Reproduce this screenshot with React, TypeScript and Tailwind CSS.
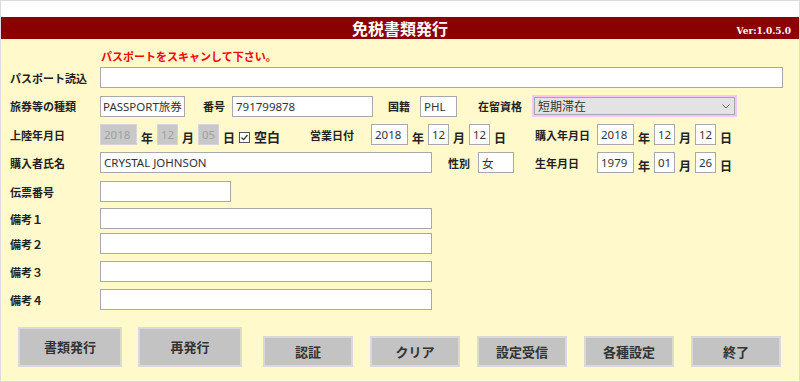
import { FC } from "react";

const jp = { fontFamily: '"Noto Sans CJK JP", "Noto Sans", sans-serif' };
const latin = { fontFamily: '"Noto Sans", "Noto Sans CJK JP", sans-serif' };

const inputCls =
  "h-[21px] border border-[#a9a9a9] bg-white px-[3px] text-[11.5px] text-[#333] leading-[19px] outline-none";
const disabledCls =
  "h-[21px] border border-[#d6d6d6] bg-[#c8c8c8] px-[3px] text-[11.5px] text-[#a0a0a0] leading-[19px] outline-none";

const Label: FC<{ text: string; w: string; ml?: string }> = ({ text, w, ml = "" }) => (
  <span className={`${w} ${ml} shrink-0 text-[11px] font-bold text-[#222] leading-[14px]`}>{text}</span>
);

const Field: FC<{ value?: string; w: string; disabled?: boolean; extra?: string }> = ({
  value = "",
  w,
  disabled,
  extra = "",
}) => (
  <input
    readOnly
    value={value}
    style={latin}
    className={`${disabled ? disabledCls : inputCls} ${w} ${extra} shrink-0`}
  />
);

const Unit: FC<{ text: string }> = ({ text }) => (
  <span className="w-[20px] shrink-0 self-end pl-[4px] text-[12px] font-bold leading-[12px] text-[#222] mb-[1px]">
    {text}
  </span>
);

const DateGroup: FC<{ y: string; m: string; d: string; disabled?: boolean }> = ({ y, m, d, disabled }) => (
  <div className="flex items-end">
    <Field value={y} w="w-[37px]" disabled={disabled} />
    <Unit text="年" />
    <Field value={m} w="w-[21px]" disabled={disabled} />
    <Unit text="月" />
    <Field value={d} w="w-[21px]" disabled={disabled} />
    <Unit text="日" />
  </div>
);

const Button: FC<{ text: string; tall?: boolean; ml?: string }> = ({ text, tall, ml = "" }) => (
  <button
    className={`${tall ? "w-[104px] h-[40px]" : "w-[90px] h-[31px]"} ${ml} shrink-0 border-2 border-[#d9d9d9] bg-[#c3c3c3] text-[13px] font-bold leading-[16px] text-[#333]`}
  >
    {text}
  </button>
);

export default function App() {
  return (
    <div style={jp} className="w-[800px] h-[382px] border border-[#dcdcdc] bg-white flex flex-col leading-[14px]">
      <div className="h-[16px] shrink-0" />

      {/* Header */}
      <div className="h-[22px] shrink-0 bg-[#8b0000] relative flex items-center justify-center">
        <span className="text-white font-bold text-[16px] leading-[20px]">免税書類発行</span>
        <span
          style={{ fontFamily: '"DejaVu Serif", serif' }}
          className="absolute right-[8px] bottom-[3px] text-[9px] font-bold text-white leading-[10px]"
        >
          Ver:1.0.5.0
        </span>
      </div>

      {/* Body */}
      <div className="flex-1 bg-[#fff9cc] pl-[9px] flex flex-col">
        <div className="mt-[10px] h-[14px] pl-[91px] text-[11px] font-bold leading-[14px] text-[#ff0000]">
          パスポートをスキャンして下さい。
        </div>

        <div className="mt-[4px] flex items-center">
          <Label text="パスポート読込" w="w-[90px]" />
          <Field w="w-[683px]" />
        </div>

        <div className="mt-[7px] flex items-center h-[22px]">
          <Label text="旅券等の種類" w="w-[90px]" />
          <Field value="PASSPORT旅券" w="w-[85px]" extra="!px-[2px]" />
          <Label text="番号" w="w-[29px]" ml="ml-[18px]" />
          <Field value="791799878" w="w-[141px]" />
          <Label text="国籍" w="w-[32px]" ml="ml-[15px]" />
          <Field value="PHL" w="w-[37px]" />
          <Label text="在留資格" w="w-[54px]" ml="ml-[21px]" />
          <div className="w-[205px] h-[22px] border-2 border-[#f6c6f6]">
            <div className="h-full border border-[#a6a6a6] bg-[#e3e3e3] flex items-center justify-between pl-[3px] pr-[4px]">
              <span className="text-[12px] leading-[14px] text-[#333]">短期滞在</span>
              <svg width="8" height="5" viewBox="0 0 8 5" fill="none" stroke="#666" strokeWidth="1">
                <path d="M0.5 0.5 L4 4 L7.5 0.5" />
              </svg>
            </div>
          </div>
        </div>

        <div className="mt-[7px] flex items-center h-[21px]">
          <Label text="上陸年月日" w="w-[90px]" />
          <DateGroup y="2018" m="12" d="05" disabled />
          <span className="mt-[6px] w-[11px] h-[11px] shrink-0 border border-[#555] bg-white flex items-center justify-center">
            <svg width="9" height="9" viewBox="0 0 9 9" fill="none" stroke="#333" strokeWidth="1.2">
              <path d="M1.5 4.5 L3.6 6.6 L7.5 2" />
            </svg>
          </span>
          <span className="ml-[4px] mt-[4px] w-[26px] shrink-0 text-[13px] font-bold leading-[16px] text-[#222]">空白</span>
          <Label text="営業日付" w="w-[61px]" ml="ml-[30px]" />
          <DateGroup y="2018" m="12" d="12" />
          <Label text="購入年月日" w="w-[62px]" ml="ml-[25px]" />
          <DateGroup y="2018" m="12" d="12" />
        </div>

        <div className="mt-[7px] flex items-center h-[21px]">
          <Label text="購入者氏名" w="w-[90px]" />
          <Field value="CRYSTAL JOHNSON" w="w-[332px]" />
          <Label text="性別" w="w-[30px]" ml="ml-[16px]" />
          <Field value="女" w="w-[36px]" />
          <Label text="生年月日" w="w-[62px]" ml="ml-[21px]" />
          <DateGroup y="1979" m="01" d="26" />
        </div>

        <div className="mt-[8px] flex items-center">
          <Label text="伝票番号" w="w-[90px]" />
          <Field w="w-[131px]" />
        </div>

        <div className="mt-[6px] flex items-center">
          <Label text="備考１" w="w-[90px]" />
          <Field w="w-[332px]" />
        </div>
        <div className="mt-[4px] flex items-center">
          <Label text="備考２" w="w-[90px]" />
          <Field w="w-[332px]" />
        </div>
        <div className="mt-[7px] flex items-center">
          <Label text="備考３" w="w-[90px]" />
          <Field w="w-[332px]" />
        </div>
        <div className="mt-[7px] flex items-center">
          <Label text="備考４" w="w-[90px]" />
          <Field w="w-[332px]" />
        </div>

        {/* Buttons */}
        <div className="mt-[17px] pl-[8px] flex items-end">
          <Button text="書類発行" tall />
          <Button text="再発行" tall ml="ml-[16px]" />
          <div className="ml-[21px] flex gap-[17px]">
            <Button text="認証" />
            <Button text="クリア" />
            <Button text="設定受信" />
            <Button text="各種設定" />
            <Button text="終了" />
          </div>
        </div>
      </div>
    </div>
  );
}
